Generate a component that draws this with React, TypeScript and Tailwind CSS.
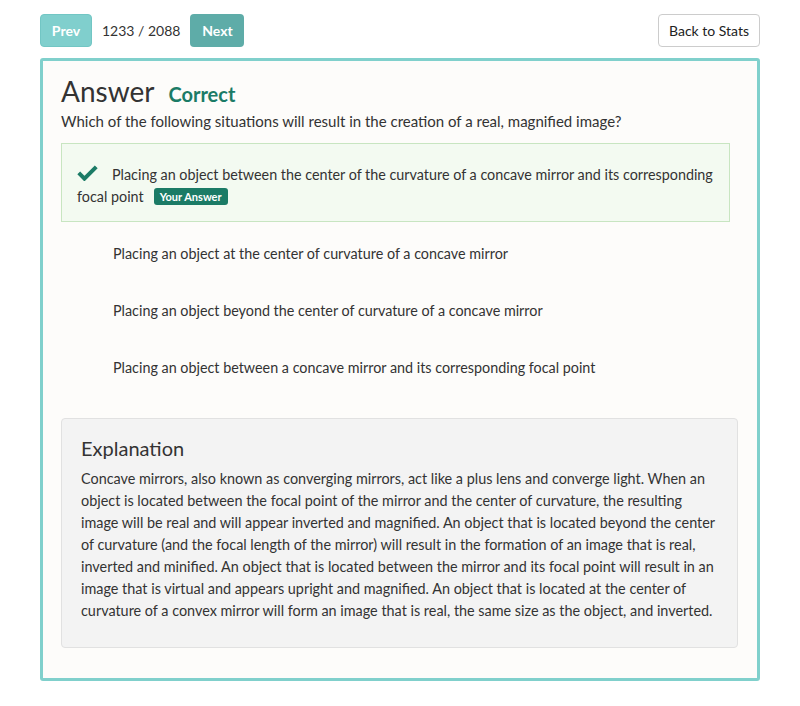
import React from "react";

const options = [
  "Placing an object at the center of curvature of a concave mirror",
  "Placing an object beyond the center of curvature of a concave mirror",
  "Placing an object between a concave mirror and its corresponding focal point",
];

const explanation = [
  "Concave mirrors, also known as converging mirrors, act like a plus lens and converge light. When an",
  "object is located between the focal point of the mirror and the center of curvature, the resulting",
  "image will be real and will appear inverted and magnified. An object that is located beyond the center",
  "of curvature (and the focal length of the mirror) will result in the formation of an image that is real,",
  "inverted and minified. An object that is located between the mirror and its focal point will result in an",
  "image that is virtual and appears upright and magnified. An object that is located at the center of",
  "curvature of a convex mirror will form an image that is real, the same size as the object, and inverted.",
];

function Check() {
  return (
    <svg
      viewBox="0 0 24 18"
      className="inline-block w-[21px] h-[17px] mr-[14px] align-[-1px]"
      aria-hidden
    >
      <path d="M2 9.5 L8.5 16 L22 2.5" fill="none" stroke="#1b7b66" strokeWidth="4.6" strokeLinecap="butt" strokeLinejoin="miter" />
    </svg>
  );
}

export default function App() {
  return (
    <div className="px-10 pt-[14px] pb-6 text-[#333] bg-white" style={{ fontFamily: "Lato, 'Open Sans', sans-serif" }}>
      <div className="flex items-center justify-between h-[33px]">
        <div className="flex items-center">
          <button className="h-[33px] w-[52px] rounded bg-[#80cfcd] text-white font-bold text-[14px] border border-[#72c6c4]">Prev</button>
          <span className="ml-[10px] text-[14px] text-[#333]">1233 / 2088</span>
          <button className="ml-[10px] h-[33px] w-[54px] rounded bg-[#5eaca8] text-white font-bold text-[14px]">Next</button>
        </div>
        <button className="h-[33px] w-[102px] rounded border border-[#ccc] bg-white text-[14px] text-[#222]">Back to Stats</button>
      </div>

      <div className="mt-[11px] border-[3px] border-[#80d0cc] rounded-[3px] bg-[#fdfcfa] pl-[18px] pr-[19px] pt-[10px] pb-[30px]">
        <div className="flex items-end">
          <h1 className="text-[28px] leading-[40px] text-[#333]">Answer</h1>
          <span className="ml-[14px] text-[20px] font-bold text-[#1b7b66] leading-[30px] mb-[2px]">Correct</span>
        </div>
        <p className="text-[15px] leading-[22px] mt-[-1px]">
          Which of the following situations will result in the creation of a real, magnified image?
        </p>

        <div className="mt-[11px] mr-[8px]">
          <div className="border border-[#c8e5c1] bg-[#f3faf1] pl-[15px] pr-[10px] pt-[20px] pb-[13px] text-[14.35px] leading-[22px]">
            <Check />
            Placing an object between the center of the curvature of a concave mirror and its corresponding focal point
            <span className="ml-[10px] inline-block rounded-[3px] bg-[#1b7b66] px-[6px] text-[11px] font-bold leading-[17px] text-white align-[1px]">Your Answer</span>
          </div>
          {options.map((o) => (
            <div key={o} className="border border-transparent pl-[51px] pr-[16px] pt-[20px] pb-[13px] text-[14.35px] leading-[22px]">
              {o}
            </div>
          ))}
        </div>

        <div className="mt-[25px] rounded border border-[#e1e1e1] bg-[#f3f3f3] pl-[19px] pr-[10px] pt-[14px] pb-[25px]">
          <h2 className="text-[20px] leading-[30px] text-[#333]">Explanation</h2>
          <div className="mt-[5px] text-[14.4px] leading-[22px]">
            {explanation.map((l) => (
              <div key={l} className="whitespace-nowrap">{l}</div>
            ))}
          </div>
        </div>
      </div>
    </div>
  );
}
